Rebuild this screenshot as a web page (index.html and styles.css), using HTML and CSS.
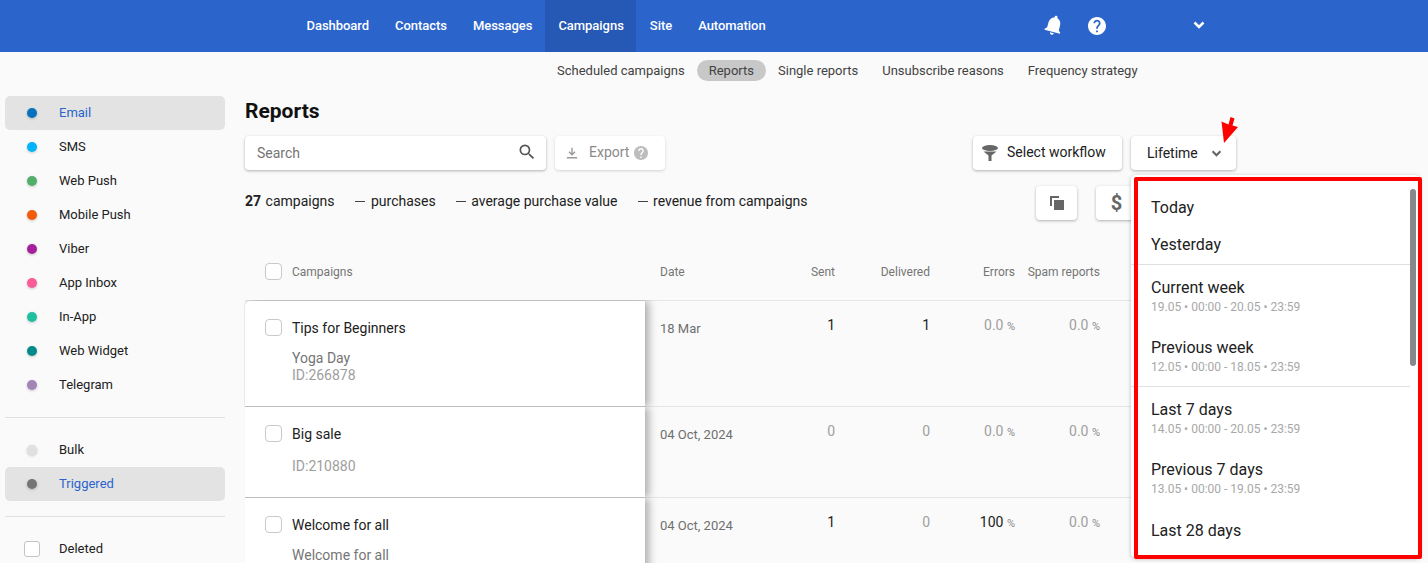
FILE: index.html
```html
<!DOCTYPE html>
<html lang="en">
<head>
<meta charset="utf-8">
<title>Reports</title>
<link rel="stylesheet" href="styles.css">
</head>
<body>
<header class="topbar">
  <nav class="topnav">
    <a class="topnav-item">Dashboard</a>
    <a class="topnav-item">Contacts</a>
    <a class="topnav-item">Messages</a>
    <a class="topnav-item is-active">Campaigns</a>
    <a class="topnav-item">Site</a>
    <a class="topnav-item">Automation</a>
  </nav>
  <div class="top-actions">
    <svg class="icon-bell" viewBox="0 0 24 24"><path d="M12 22c1.100 0 2-.9 2-2h-4c0 1.100.89 2 2 2zm6-6v-5c0-3.070-1.640-5.640-4.500-6.320V4c0-.83-.67-1.500-1.500-1.500s-1.500.67-1.500 1.500v.68C7.630 5.360 6 7.920 6 11v5l-2 2v1h16v-1l-2-2z"/></svg>
    <svg class="icon-help" viewBox="2 2 20 20"><path d="M12 2C6.480 2 2 6.480 2 12s4.480 10 10 10 10-4.480 10-10S17.520 2 12 2zm1 17h-2v-2h2v2zm2.070-7.750l-.9.920C13.450 12.900 13 13.500 13 15h-2v-.5c0-1.100.45-2.100 1.170-2.830l1.240-1.260c.37-.36.59-.86.59-1.410 0-1.100-.9-2-2-2s-2 .9-2 2H8c0-2.210 1.790-4 4-4s4 1.790 4 4c0 .88-.36 1.680-.93 2.250z"/></svg>
    <svg class="icon-chevron-top" viewBox="0 0 12 8"><path d="M1.500 1.500 6 6l4.500-4.500"/></svg>
  </div>
</header>

<nav class="subnav">
  <a class="subnav-item">Scheduled campaigns</a>
  <a class="subnav-item is-active">Reports</a>
  <a class="subnav-item">Single reports</a>
  <a class="subnav-item">Unsubscribe reasons</a>
  <a class="subnav-item">Frequency strategy</a>
</nav>

<div class="layout">
  <aside class="sidebar">
    <ul class="side-list">
      <li class="side-item is-active"><span class="dot dot-email"></span>Email</li>
      <li class="side-item"><span class="dot dot-sms"></span>SMS</li>
      <li class="side-item"><span class="dot dot-webpush"></span>Web Push</li>
      <li class="side-item"><span class="dot dot-mobile"></span>Mobile Push</li>
      <li class="side-item"><span class="dot dot-viber"></span>Viber</li>
      <li class="side-item"><span class="dot dot-inbox"></span>App Inbox</li>
      <li class="side-item"><span class="dot dot-inapp"></span>In-App</li>
      <li class="side-item"><span class="dot dot-widget"></span>Web Widget</li>
      <li class="side-item"><span class="dot dot-telegram"></span>Telegram</li>
    </ul>
    <ul class="side-list side-list-ruled">
      <li class="side-item"><span class="dot dot-bulk"></span>Bulk</li>
      <li class="side-item is-active"><span class="dot dot-triggered"></span>Triggered</li>
    </ul>
    <ul class="side-list side-list-ruled">
      <li class="side-item"><span class="side-check"></span>Deleted</li>
    </ul>
  </aside>

  <main class="main">
    <h1 class="title">Reports</h1>

    <div class="toolbar">
      <div class="toolbar-left">
        <div class="search">
          <span class="search-text">Search</span>
          <svg class="icon-search" viewBox="0 0 24 24"><path d="M15.500 14h-.79l-.28-.27A6.470 6.470 0 0 0 16 9.500 6.500 6.500 0 1 0 9.500 16c1.610 0 3.090-.59 4.230-1.570l.27.28v.79l5 4.990L20.490 19l-4.990-5zm-6 0C7.010 14 5 11.990 5 9.500S7.010 5 9.500 5 14 7.010 14 9.500 11.990 14 9.500 14z"/></svg>
        </div>
        <div class="btn btn-export">
          <svg class="icon-download" viewBox="0 0 14 14"><path d="M7 1v7.500M3.500 5.500 7 9l3.500-3.500M1 12.500h12"/></svg>
          <span class="btn-label">Export</span>
          <svg class="icon-help-grey" viewBox="2 2 20 20"><path d="M12 2C6.480 2 2 6.480 2 12s4.480 10 10 10 10-4.480 10-10S17.520 2 12 2zm1 17h-2v-2h2v2zm2.070-7.750l-.9.920C13.450 12.900 13 13.500 13 15h-2v-.5c0-1.100.45-2.100 1.170-2.830l1.240-1.260c.37-.36.59-.86.59-1.410 0-1.100-.9-2-2-2s-2 .9-2 2H8c0-2.210 1.790-4 4-4s4 1.790 4 4c0 .88-.36 1.680-.93 2.250z"/></svg>
        </div>
      </div>
      <div class="toolbar-right">
        <div class="btn btn-workflow">
          <svg class="icon-funnel" viewBox="0 0 16 16"><ellipse cx="8" cy="3" rx="8" ry="3"/><path d="M1.500 6.500h13L9.500 10.500V16h-3v-5.500z"/></svg>
          <span class="btn-label">Select workflow</span>
        </div>
        <div class="btn btn-lifetime">
          <span>Lifetime</span>
          <svg class="icon-chevron" viewBox="0 0 12 8"><path d="M1.500 1.500 6 6l4.500-4.500"/></svg>
        </div>
      </div>
    </div>

    <div class="stats-row">
      <div class="stats">
        <span class="stat-count"><b>27</b> campaigns</span>
        <span><i class="dash"></i>purchases</span>
        <span><i class="dash"></i>average purchase value</span>
        <span><i class="dash"></i>revenue from campaigns</span>
      </div>
      <div class="stat-buttons">
        <div class="btn btn-icon">
          <svg class="icon-copy" viewBox="0 0 14 14"><path d="M0 0h9v2H2v8H0z"/><path d="M4 4h10v10H4z"/></svg>
        </div>
        <div class="btn btn-icon btn-dollar">$</div>
      </div>
    </div>

    <div class="table">
      <div class="row row-head">
        <div class="cell-name"><span class="check"></span>Campaigns</div>
        <div class="cell-date">Date</div>
        <div class="num">Sent</div>
        <div class="num">Delivered</div>
        <div class="num">Errors</div>
        <div class="num">Spam reports</div>
      </div>

      <div class="row row-a">
        <div class="cell-name first">
          <span class="check"></span>
          <div>
            <div class="c-title">Tips for Beginners</div>
            <div class="c-sub">Yoga Day</div>
            <div class="c-id">ID:266878</div>
          </div>
        </div>
        <div class="cell-date">18 Mar</div>
        <div class="num val"><span class="strong">1</span></div>
        <div class="num val"><span class="strong">1</span></div>
        <div class="num val">0.0 <small>%</small></div>
        <div class="num val">0.0 <small>%</small></div>
      </div>

      <div class="row row-b">
        <div class="cell-name">
          <span class="check"></span>
          <div>
            <div class="c-title">Big sale</div>
            <div class="c-id c-id-gap">ID:210880</div>
          </div>
        </div>
        <div class="cell-date">04 Oct, 2024</div>
        <div class="num val">0</div>
        <div class="num val">0</div>
        <div class="num val">0.0 <small>%</small></div>
        <div class="num val">0.0 <small>%</small></div>
      </div>

      <div class="row row-c">
        <div class="cell-name">
          <span class="check"></span>
          <div>
            <div class="c-title">Welcome for all</div>
            <div class="c-sub">Welcome for all</div>
          </div>
        </div>
        <div class="cell-date">04 Oct, 2024</div>
        <div class="num val"><span class="strong">1</span></div>
        <div class="num val">0</div>
        <div class="num val"><span class="strong">100</span> <small>%</small></div>
        <div class="num val">0.0 <small>%</small></div>
      </div>
    </div>
  </main>
</div>

<div class="dropdown">
  <div class="dd-group">
    <div class="dd-item dd-simple">Today</div>
    <div class="dd-item dd-simple">Yesterday</div>
  </div>
  <div class="dd-group dd-ruled">
    <div class="dd-item">Current week<small>19.05 • 00:00 - 20.05 • 23:59</small></div>
    <div class="dd-item">Previous week<small>12.05 • 00:00 - 18.05 • 23:59</small></div>
  </div>
  <div class="dd-group dd-ruled">
    <div class="dd-item">Last 7 days<small>14.05 • 00:00 - 20.05 • 23:59</small></div>
    <div class="dd-item">Previous 7 days<small>13.05 • 00:00 - 19.05 • 23:59</small></div>
    <div class="dd-item dd-last">Last 28 days</div>
  </div>
  <span class="dd-scrollbar"></span>
</div>
<div class="annot-frame"></div>
<svg class="annot-arrow" viewBox="0 0 20 30"><path d="M6 28 3.500 6.500 10.500 9.500 12.500 2 16.500 3.500 14.500 10.500 20 12z"/></svg>
</body>
</html>
```

FILE: styles.css
```css
* { box-sizing: border-box; }
html, body { height: 563px; overflow: hidden; }
body {
  margin: 0;
  background: #fafafa;
  color: #212121;
  font-family: Roboto, "Liberation Sans", sans-serif;
  font-size: 13px;
  position: relative;
}
ul { list-style: none; margin: 0; padding: 0; }

/* top bar */
.topbar {
  height: 52px;
  background: #2b65cc;
  display: flex;
  align-items: stretch;
  padding-left: 293px;
}
.topnav { display: flex; }
.topnav-item {
  padding: 0 12.500px 1px 13.500px;
  display: flex;
  align-items: center;
  color: #fff;
  font-weight: 500;
  font-size: 13px;
  letter-spacing: -0.04px;
}
.topnav-item.is-active { background: #2659b5; }
.top-actions { display: flex; align-items: center; margin-left: 264px; }
.icon-bell { width: 24px; height: 24px; fill: #fff; transform: rotate(15deg); margin-top: -2px; }
.icon-help { width: 18px; height: 18px; fill: #fff; margin-left: 22px; }
.icon-chevron-top { width: 12px; height: 8px; margin-left: 87px; margin-top: -2px; fill: none; stroke: #fff; stroke-width: 2.500; }

/* sub nav */
.subnav {
  display: flex;
  height: 44px;
  padding: 8px 0 15px 545px;
}
.subnav-item {
  padding: 0 12px;
  height: 21px;
  line-height: 21px;
  border-radius: 11px;
  color: #424242;
}
.subnav-item.is-active { background: #c8c8c8; }

.layout { display: flex; height: 467px; overflow: hidden; }

/* sidebar */
.sidebar { width: 245px; padding-left: 5px; flex: none; }
.side-list { width: 220px; }
.side-list-ruled { border-top: 1px solid #e0e0e0; padding-top: 15px; margin-top: 15px; }
.side-item {
  height: 34px;
  display: flex;
  align-items: center;
  padding: 0 0 2px 22px;
  border-radius: 5px;
  color: #212121;
}
.side-item.is-active { background: #e3e3e3; color: #2b65cc; }
.dot {
  width: 10px;
  height: 10px;
  border-radius: 50%;
  margin: 2px 22px 0 0;
  box-shadow: 0 1px 3px rgba(0,0,0,.2);
}
.dot-email { background: #0672bd; }
.dot-sms { background: #03b3fb; }
.dot-webpush { background: #52ae6b; }
.dot-mobile { background: #f35b04; }
.dot-viber { background: #a5219b; }
.dot-inbox { background: #f95b96; }
.dot-inapp { background: #1fbf9f; }
.dot-widget { background: #028a88; }
.dot-telegram { background: #a284b6; }
.dot-bulk { background: #e0e0e0; }
.dot-triggered { background: #757575; }
.side-check {
  width: 16px;
  height: 16px;
  margin: 2px 19px 0 -3px;
  border: 1px solid #c4c4c4;
  border-radius: 3px;
  background: #fff;
}

/* main */
.main { flex: 1; min-width: 0; }
.title {
  margin: 0;
  height: 40px;
  padding-top: 3px;
  font-size: 21px;
  line-height: 24px;
  font-weight: 700;
  color: #111;
}
.btn {
  background: #fff;
  border-radius: 4px;
  box-shadow: 0 1px 3px rgba(0,0,0,.3);
  display: flex;
  align-items: center;
  height: 34px;
}
.btn-label { margin-top: -2px; }
.toolbar { display: flex; justify-content: space-between; width: 991px; height: 34px; }
.toolbar-left, .toolbar-right { display: flex; gap: 9px; }
.search {
  width: 301px;
  height: 34px;
  background: #fff;
  border-radius: 4px;
  box-shadow: 0 1px 3px rgba(0,0,0,.3);
  display: flex;
  align-items: center;
  justify-content: space-between;
  padding: 0 9px 0 12px;
  font-size: 14px;
  color: #757575;
}
.icon-search { width: 20px; height: 20px; fill: #555; margin-top: -2px; }
.btn-export {
  width: 110px;
  padding-left: 11px;
  color: #8a8a8a;
  font-size: 14px;
  box-shadow: 0 1px 3px rgba(0,0,0,.16);
}
.icon-download { width: 12px; height: 14px; fill: none; stroke: #999; stroke-width: 1.600; margin-right: 11px; }
.icon-help-grey { width: 14px; height: 14px; fill: #bdbdbd; margin-left: 5px; }
.btn-workflow { width: 149px; padding-left: 9px; font-size: 14px; color: #212121; }
.icon-funnel { width: 16px; height: 16px; fill: #666; margin-right: 9px; }
.btn-lifetime { width: 105px; padding-left: 16px; font-size: 14px; color: #212121; }
.icon-chevron { width: 11px; height: 7px; margin-left: 13px; fill: none; stroke: #666; stroke-width: 2.500; }

.stats-row { display: flex; justify-content: space-between; align-items: center; width: 892px; margin-top: 15px; height: 35px; }
.stats { display: flex; gap: 20px; font-size: 14px; margin-top: -3px; }
.stats b { font-weight: 700; margin-right: 1px; }
.stat-count { margin-right: 1px; }
.dash { display: inline-block; width: 10px; height: 1px; background: #424242; margin-right: 5.500px; vertical-align: 4px; }
.stat-buttons { display: flex; gap: 19px; }
.btn-icon { width: 41px; height: 34px; justify-content: center; }
.icon-copy { width: 14px; height: 14px; fill: #666; }
.btn-dollar { font-size: 20px; font-weight: 700; color: #666; }

/* table */
.table { margin-top: 30px; width: 895px; }
.row {
  display: grid;
  grid-template-columns: 400px 105px 85px 95px 85px 85px;
  border-bottom: 1px solid #e6e6e6;
}
.row-head { height: 51px; align-items: center; font-size: 12px; color: #757575; padding-bottom: 7px; }
.row-a { height: 106px; }
.row-b { height: 91px; }
.row-c { height: 100px; }
.cell-name { display: flex; align-items: flex-start; padding: 18px 0 0 20px; }
.row-head .cell-name { padding: 0 0 0 20px; align-items: center; }
.row-a .cell-name, .row-b .cell-name, .row-c .cell-name {
  background: #fff;
  box-shadow: 4px 0 8px rgba(0,0,0,.3);
  clip-path: inset(0 -14px 0 0);
  border-bottom: 1px solid #bdbdbd;
  margin-bottom: -1px;
}
.row-a .cell-name.first {
  border-top-left-radius: 5px;
  box-shadow: 4px 0 8px rgba(0,0,0,.3), 0 0 1px rgba(0,0,0,.25);
  clip-path: inset(-1px -14px 0 -1px);
}
.check {
  width: 17px;
  height: 17px;
  flex: none;
  margin-right: 10px;
  border: 1px solid #c9c9c9;
  border-radius: 4px;
  background: #fff;
}
.c-title { font-size: 14px; line-height: 18px; color: #212121; }
.c-sub { font-size: 14px; line-height: 17px; color: #757575; margin-top: 13px; }
.c-id { font-size: 14px; line-height: 17px; color: #9e9e9e; }
.c-id-gap { margin-top: 15px; }
.cell-date { padding: 20px 0 0 15px; font-size: 13px; color: #6f6f6f; }
.row-head .cell-date { padding: 0 0 0 15px; font-size: 12px; color: #757575; }
.num { text-align: right; }
.val { padding-top: 16px; font-size: 14px; color: #a0a0a0; }
.val small { font-size: 11px; color: #8a8a8a; }
.strong { color: #212121; }

/* dropdown overlay */
.dropdown {
  position: absolute;
  left: 1131px;
  top: 175px;
  width: 289px;
  height: 383px;
  background: #fff;
  border-radius: 5px;
  box-shadow: 0 1px 4px rgba(0,0,0,.25);
  padding-top: 15px;
  overflow: hidden;
}
.dd-group { width: 279px; }
.dd-ruled { border-top: 1px solid #e0e0e0; padding-bottom: 1px; }
.dd-group:first-child { padding-bottom: 0; }
.dd-item { padding: 13px 0 0 20px; height: 60px; font-size: 16px; line-height: 20px; color: #212121; }
.dd-simple { height: 37px; padding-top: 8px; }
.dd-last { height: 46px; padding-top: 14px; }
.dd-item small { display: block; font-size: 12px; line-height: 14px; margin-top: 2px; color: #a8a8a8; }
.dd-scrollbar {
  position: absolute;
  left: 279px;
  top: 14px;
  width: 6px;
  height: 177px;
  border-radius: 3px;
  background: #888;
}
.annot-frame {
  position: absolute;
  left: 1134px;
  top: 177px;
  width: 288px;
  height: 382px;
  border: 4px solid #ff0000;
  border-radius: 2px;
}
.annot-arrow {
  position: absolute;
  left: 1218px;
  top: 115px;
  width: 20px;
  height: 30px;
  fill: #ff0000;
}
```
